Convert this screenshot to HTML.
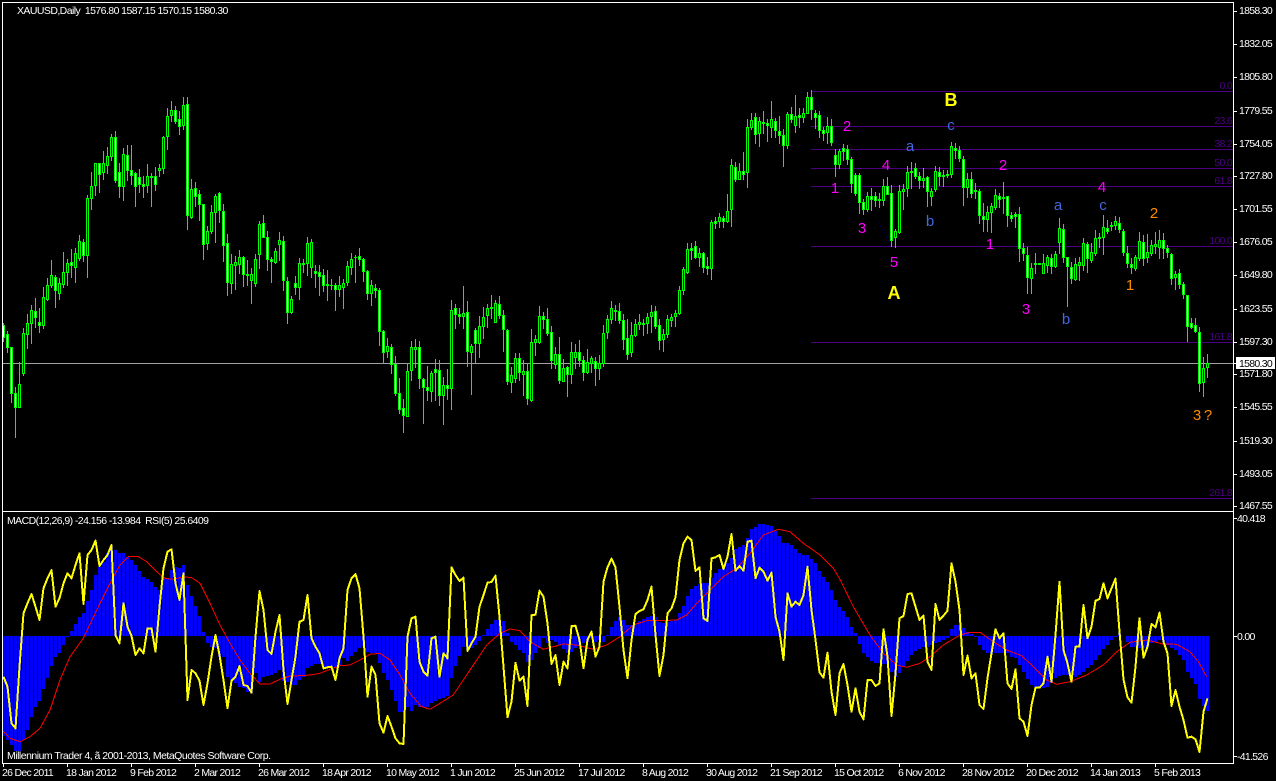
<!DOCTYPE html>
<html><head><meta charset="utf-8"><title>XAUUSD,Daily</title>
<style>
html,body{margin:0;padding:0;background:#000;width:1276px;height:781px;overflow:hidden}
svg{display:block;position:absolute;left:0;top:0}
text{font-family:"Liberation Sans",sans-serif;font-size:10.5px;letter-spacing:-.7px;fill:#fff;white-space:pre}
.f{fill:#4b0082;text-anchor:end}
.w{font-size:15px;letter-spacing:0;text-anchor:middle}
.m{fill:#ff00ff}.o{fill:#ff8c00}.u{fill:#4169e1}
.y{fill:#ffff00;font-size:18px;font-weight:bold;letter-spacing:0;text-anchor:middle}
</style></head><body>
<svg id="c" width="1276" height="781" viewBox="0 0 1276 781" xmlns="http://www.w3.org/2000/svg">
<rect width="1276" height="781" fill="#000"/>
<g id="fib" fill="#4b0082" shape-rendering="crispEdges">
<rect x="811" y="91" width="422" height="1"/><rect x="811" y="126" width="422" height="1"/><rect x="811" y="149" width="422" height="1"/><rect x="811" y="168" width="422" height="1"/><rect x="811" y="186" width="422" height="1"/><rect x="811" y="246" width="422" height="1"/><rect x="811" y="342" width="422" height="1"/><rect x="811" y="498" width="422" height="1"/>
</g>
<line x1="811" y1="91" x2="891" y2="246" stroke="#000080" stroke-width="1" stroke-dasharray="1 3"/>
<rect x="3" y="363" width="1230" height="1" fill="#a0a0a0"/>
<g id="cd" shape-rendering="crispEdges"></g>
<g id="hs" fill="#0000ff" shape-rendering="crispEdges"></g>
<polyline id="rd" fill="none" stroke="#ff0000" stroke-width="1" shape-rendering="crispEdges"/>
<polyline id="rs" fill="none" stroke="#ffff00" stroke-width="2" stroke-linejoin="round" shape-rendering="crispEdges"/>
<g fill="#fff" shape-rendering="crispEdges">
<rect x="2" y="2" width="1232" height="1"/><rect x="2" y="2" width="1" height="762"/><rect x="1233" y="2" width="1" height="762"/><rect x="2" y="511" width="1232" height="1"/><rect x="2" y="763" width="1232" height="1"/>
</g>
<g id="tk" fill="#fff" shape-rendering="crispEdges"></g>
<g class="f">
<text class="f" x="1232" y="89">0.0</text><text class="f" x="1232" y="124">23.6</text><text class="f" x="1232" y="147">38.2</text><text class="f" x="1232" y="166">50.0</text><text class="f" x="1232" y="184">61.8</text><text class="f" x="1232" y="244">100.0</text><text class="f" x="1232" y="340">161.8</text><text class="f" x="1232" y="496">261.8</text>
</g>
<text x="17" y="14" style="letter-spacing:-.57px">XAUUSD,Daily  1576.80 1587.15 1570.15 1580.30</text>
<text x="7" y="524" style="letter-spacing:-.57px">MACD(12,26,9) -24.156 -13.984  RSI(5) 25.6409</text>
<text x="7" y="759" style="letter-spacing:-.5px">Millennium Trader 4, ã 2001-2013, MetaQuotes Software Corp.</text>
<text x="1239" y="14">1858.30</text><text x="1239" y="47">1832.05</text><text x="1239" y="80">1805.80</text><text x="1239" y="114">1779.55</text><text x="1239" y="147">1754.05</text><text x="1239" y="179">1727.80</text><text x="1239" y="212">1701.55</text><text x="1239" y="245">1676.05</text><text x="1239" y="278">1649.80</text><text x="1239" y="312">1623.55</text><text x="1239" y="345">1597.30</text><text x="1239" y="377">1571.80</text><text x="1239" y="410">1545.55</text><text x="1239" y="444">1519.30</text><text x="1239" y="477">1493.05</text><text x="1239" y="509">1467.55</text>
<rect x="1236" y="357" width="39" height="12" fill="#fff"/>
<text x="1239" y="367" style="fill:#000">1580.30</text>
<text x="1237" y="522">40.418</text><text x="1237" y="640">0.00</text><text x="1237" y="760">-41.526</text>
<text x="2" y="776">26 Dec 2011</text><text x="66" y="776">18 Jan 2012</text><text x="130" y="776">9 Feb 2012</text><text x="194" y="776">2 Mar 2012</text><text x="258" y="776">26 Mar 2012</text><text x="322" y="776">18 Apr 2012</text><text x="386" y="776">10 May 2012</text><text x="450" y="776">1 Jun 2012</text><text x="514" y="776">25 Jun 2012</text><text x="578" y="776">17 Jul 2012</text><text x="642" y="776">8 Aug 2012</text><text x="706" y="776">30 Aug 2012</text><text x="770" y="776">21 Sep 2012</text><text x="834" y="776">15 Oct 2012</text><text x="898" y="776">6 Nov 2012</text><text x="962" y="776">28 Nov 2012</text><text x="1026" y="776">20 Dec 2012</text><text x="1090" y="776">14 Jan 2013</text><text x="1154" y="776">5 Feb 2013</text>
<text class="w m" x="847" y="131">2</text><text class="w m" x="835" y="193">1</text><text class="w m" x="886" y="170">4</text><text class="w m" x="862" y="233">3</text><text class="w m" x="894" y="267">5</text>
<text class="y" x="894" y="299">A</text><text class="y" x="951" y="106">B</text>
<text class="w u" x="910" y="151">a</text><text class="w u" x="930" y="226">b</text><text class="w u" x="951" y="130">c</text>
<text class="w m" x="1003" y="170">2</text><text class="w m" x="990" y="249">1</text><text class="w m" x="1026" y="314">3</text>
<text class="w u" x="1058" y="210">a</text><text class="w u" x="1066" y="324">b</text><text class="w u" x="1103" y="210">c</text><text class="w m" x="1102" y="192">4</text>
<text class="w o" x="1154" y="218">2</text><text class="w o" x="1130" y="290">1</text><text class="w o" x="1197" y="420">3</text><text class="w o" x="1208" y="420">?</text>
</svg>
<script>
var NS="http://www.w3.org/2000/svg";
function R(p,x,y,w,h,f){var r=document.createElementNS(NS,"rect");r.setAttribute("x",x);r.setAttribute("y",y);r.setAttribute("width",w);r.setAttribute("height",h);if(f)r.setAttribute("fill",f);p.appendChild(r);}
var C="730 735 770 782 w,752 763 800 815 w,802 802 940 965 w,920 940 982 1070 w,847 913 982 982 b,745 760 880 884 b,702 730 762 803 b,675 691 728 789 b,655 694 712 740 w,684 727 734 755 w,621 652 734 745 b,595 616 656 659 b,540 586 616 622 b,586 592 631 680 w,595 610 638 656 b,516 577 613 620 b,538 550 577 614 b,507 547 556 590 w,505 520 560 605 b,465 484 535 540 b,478 487 526 543 w,345 355 526 590 b,277 319 355 386 b,250 250 316 345 b,250 250 283 335 w,213 250 277 297 b,200 229 256 280 b,162 172 229 240 b,153 172 301 307 w,249 277 319 350 w,205 223 319 359 b,195 226 271 300 w,195 271 286 313 w,277 280 319 377 w,268 292 313 335 w,289 313 319 350 w,252 289 316 335 b,280 288 290 377 w,260 289 313 330 w,253 265 271 288 b,168 172 265 280 b,84 107 169 208 b,63 91 104 122 b,78 91 122 128 w,93 118 139 163 w,52 76 136 147 b,51 73 406 446 w,297 328 412 415 b,307 325 349 378 w,331 343 373 420 w,373 373 493 537 w,437 454 490 506 b,376 397 454 458 b,342 349 397 485 b,337 340 391 425 w,373 394 496 542 w,463 490 607 644 w,523 553 610 640 b,528 547 556 627 b,510 532 553 580 b,528 532 583 618 w,541 583 584 615 w,565 583 601 668 b,522 538 610 618 b,423 433 521 565 b,405 430 470 472 w,453 472 536 570 w,530 538 542 605 w,505 514 545 548 b,456 481 493 540 b,469 484 601 629 w,592 604 697 728 w,648 658 697 700 b,588 610 622 642 w,535 550 622 656 b,538 550 553 577 b,472 490 550 584 b,478 487 562 590 b,556 574 580 620 w,556 577 589 644 w,568 586 616 632 w,571 613 616 659 w,596 615 616 628 w,610 616 628 689 w,589 616 628 647 b,598 610 620 683 b,544 559 607 616 b,520 538 562 583 b,526 531 532 605 w,505 529 538 556 w,535 538 574 602 w,571 574 640 656 w,600 616 640 674 b,613 625 631 652 w,625 631 754 794 w,750 754 817 850 w,775 799 814 830 b,793 802 853 878 w,828 853 940 944 w,895 940 988 1000 w,958 985 1006 1055 w,850 874 1009 1009 b,783 802 871 899 b,778 802 808 860 b,782 802 895 923 w,"
+"895 898 922 1028 w,858 922 931 960 w,873 880 934 962 b,838 868 877 960 w,840 871 946 974 w,892 916 946 1031 b,868 916 925 958 w,660 691 925 986 b,672 685 703 743 w,685 703 709 728 w,618 700 709 743 b,663 697 814 858 w,793 799 817 941 b,745 751 790 846 w,709 739 790 830 b,682 712 739 775 b,673 685 706 740 b,645 682 685 715 w,660 670 727 727 b,648 673 706 713 w,690 706 748 812 w,748 751 904 912 w,862 886 907 935 b,820 835 895 905 b,820 835 877 900 w,840 874 883 946 b,850 874 955 971 w,747 787 959 962 b,765 778 787 825 b,678 709 787 790 b,697 709 718 745 w,685 718 760 765 w,739 757 841 865 w,802 823 853 865 b,771 823 901 908 w,838 865 904 904 b,857 862 883 947 w,785 817 883 908 b,793 817 832 865 b,781 817 841 857 w,829 841 877 899 w,808 847 877 880 b,829 835 850 877 b,830 844 865 914 w,825 850 865 897 b,736 760 850 858 b,706 718 755 774 b,663 685 718 730 b,676 691 692 720 w,670 694 721 730 w,703 721 778 806 w,718 775 823 836 w,725 766 817 829 b,718 733 765 769 b,703 727 733 748 b,717 730 731 765 w,700 712 730 760 b,675 697 709 757 b,677 694 739 745 w,718 736 781 808 w,748 763 778 812 b,706 718 763 770 b,703 712 721 738 b,690 700 709 738 b,618 631 700 703 b,562 568 631 643 b,490 508 577 580 b,490 505 511 538 w,484 499 532 535 w,505 520 532 558 b,517 520 562 575 w,532 559 565 581 w,420 427 565 596 b,412 424 428 443 w,400 412 424 441 b,408 415 422 442 w,343 394 422 425 b,237 256 388 437 b,246 262 298 302 w,250 274 298 298 b,217 274 281 298 w,118 142 277 320 b,99 121 140 146 b,100 112 163 190 w,112 124 160 197 b,94 127 128 160 w,118 130 136 182 w,64 118 142 170 b,115 124 151 170 w,108 154 166 190 w,148 166 196 257 w,95 103 194 203 b,82 103 118 125 w,45 109 136 155 b,83 106 112 140 w,83 100 112 125 b,35 52 100 100 b,31 52 88 118 w,"
+"90 100 112 145 w,92 106 151 170 w,140 151 160 180 w,112 139 157 190 b,118 139 187 196 w,208 226 253 287 w,208 214 253 265 b,193 205 214 240 w,196 208 238 253 w,230 238 310 335 w,280 286 340 345 w,280 286 367 398 w,358 367 388 403 w,335 349 388 393 b,325 349 358 390 w,335 349 361 378 w,340 358 361 380 w,297 319 361 375 b,292 319 343 343 w,316 340 481 497 w,448 454 470 500 b,316 334 457 460 b,313 328 334 387 b,258 277 325 349 b,247 274 277 325 w,250 265 289 295 w,275 289 301 325 w,265 295 301 320 b,287 292 334 377 w,325 334 349 374 b,258 274 328 334 b,262 277 289 315 w,270 286 287 319 w,270 283 286 290 w,185 199 283 292 b,190 205 211 235 w,198 211 235 242 w,228 238 322 375 w,280 298 322 352 b,275 298 340 350 w,310 331 334 355 w,328 334 406 430 w,370 409 418 452 w,378 397 418 453 b,368 379 397 455 b,327 346 382 388 b,338 349 358 382 w,305 352 355 400 w,349 349 406 437 w,395 406 415 422 w,395 403 409 440 w,382 403 505 542 w,488 505 520 540 w,502 526 592 640 w,550 565 595 640 b,520 550 552 578 w,550 550 552 552 w,522 550 580 580 b,525 532 556 575 b,522 535 559 580 w,514 523 559 560 b,415 445 487 520 b,432 448 532 545 w,530 532 559 677 w,545 562 595 610 w,535 553 596 600 b,530 547 556 600 b,475 490 556 570 b,485 493 535 575 w,490 517 541 545 b,450 475 518 525 b,460 472 473 500 w,405 442 472 522 b,420 445 454 460 w,425 436 437 450 w,408 424 436 446 b,412 430 448 455 w,448 454 517 525 w,497 520 550 560 w,535 553 562 578 w,525 532 565 570 b,457 484 535 540 b,465 487 535 555 w,463 517 532 545 b,480 496 520 525 b,455 493 499 520 b,450 481 502 535 b,460 481 505 535 w,495 505 515 530 w,520 523 595 612 w,572 583 592 628 b,568 580 613 625 w,605 613 643 655 w,645 646 739 782 w,715 730 741 745 w,715 736 753 755 w,740 757 910 932 w,830 865 907 948 b,822 850 862 890 b";
var cd=document.getElementById("cd");
function Y(v){return Math.round(80+v/3);}
C.split(",").forEach(function(s,k){
 var a=s.split(" ");var h=Y(+a[0]),t=Y(+a[1]),b=Y(+a[2]),l=Y(+a[3]);var x=3+4*k;
 R(cd,x,h,1,Math.max(1,l-h+1),"#00ff00");
 R(cd,x-1,t,3,Math.max(1,b-t+1),"#00ff00");
 if(b-t>=2)R(cd,x,t+1,1,b-t-1,a[4]=="w"?"#ffffff":"#000000");
});
var H4=[678,690,705,722,722,690,660,622,592,574,538,504,468,442,430,405,382,362,342,322,310,274,240,195,172,155,130,112,120,130,130,140,150,165,182,202,208,217,232,240,200,205,180,172,174,166,226,258,288,318,366,398,410,415,442,442,500,510,520,530,535,545,550,490,515,500,498,495,490,480,512,515,525,525,510,500,475,468,462,462,470,472,470,470,465,445,452,438,425,415,408,425,428,430,460,490,510,540,572,605,605,590,604,585,590];
var H5=[590,590,578,572,568,565,558,505,468,438,412,420,415,405,392,375,358,342,330,330,334,370,395,405,420,430,455,450,430,415,384,400,390,395,405,418,430,425,415,405,400,395,385,395,390,395,375,350,332,322,330,345,345,340,332,328,322,318,322,335,338,335,332,330,310,288,258,238,228,222,220,218,205,190,178,170,160,145,118,110,105,85,58,50,42,42,44,48,62,78,98,100,105,118,128,135,135,148,160,182,202,215,240,270,292];
var H6=[303,320,352,370,402,430,440,452,460,460,462,462,485,500,490,470,452,435,422,418,412,410,405,400,395,390,385,358,345,345,355,365,372,382,405,420,430,432,430,430,430,430,442,445,465,485,508,525,530,535,535,532,520,505,498,495,495,505,500,495,485,475,465,450,435,418,405,390,380,370,378,395,410,412,415,415,412,400,395,390,395,405,415,420,435,450,485,505,522,568,588,603];
var H=[].concat(H4,H5,H6);
var hs=document.getElementById("hs");
H.forEach(function(v,k){var y=Math.round(510+v/3);var x=2+4*k;if(k==0){x=3;}
 var w=k==0?2:3;
 if(y<636)R(hs,x,y,w,636-y);else if(y>636)R(hs,x,636,w,y-636);});
var R4=[500,530,640,655,470,310,280,252,290,330,235,205,180,290,265,220,190,205,165,130,282,135,120,92,168,150,135,105,375,400,280,350,378,435,415,430,355,355,425,290,175,125,118,220,270,190,570,480,490,512,585,520,440,375,435,510,595,512,500,468,525,528,548,380,243,300,420,432,365,315,480,582,510,440,335,330,255,385,410,430,475,472,470,510,445,415,240,205,192,235,380,560,470,495,640,668,618,650,685,700,702,380,325,320,455];
var R5=[485,497,385,380,500,430,445,172,195,213,203,423,400,380,290,255,218,216,197,320,470,622,575,458,512,500,588,316,314,242,260,340,462,435,525,455,475,348,347,390,475,390,365,440,410,215,172,146,172,290,420,505,390,312,303,298,270,230,375,498,435,310,295,262,150,100,80,90,183,172,325,333,145,142,135,177,140,72,182,168,182,95,92,205,173,185,212,188,320,365,450,250,290,275,285,255,170,300,390,487,503,428,545,615,490];
var R6=[462,525,605,535,605,628,510,510,528,520,358,440,618,490,325,318,252,250,290,330,317,455,480,282,330,317,302,160,215,300,495,437,505,490,585,597,505,430,358,385,370,520,537,478,625,635,678,585,533,533,520,440,515,375,215,420,460,515,410,410,285,385,350,272,267,220,265,235,206,365,508,562,578,470,325,443,410,342,352,308,395,430,588,540,590,630,683,680,688,726,605,565];
var P=[].concat(R4,R5,R6);
document.getElementById("rs").setAttribute("points",P.map(function(v,k){return (3.5+4*k)+","+(510+v/3).toFixed(1);}).join(" "));
var r4=[8,662,30,685,60,695,90,680,120,655,150,600,180,510,210,440,250,385,290,300,330,220,360,165,385,140,415,140,440,155,470,185,495,205,520,208,550,200,575,203,600,220,630,280,660,345,690,400,720,450,750,490,780,522,810,522,840,508,870,498,900,497,930,495,960,490,990,478,1020,467,1050,465,1080,450,1110,433,1140,430,1170,450,1200,495,1230,550,1260,585];
var r5=[0,588,30,598,60,580,100,555,130,510,170,450,200,405,240,370,270,357,300,362,330,395,370,418,400,410,430,402,470,405,520,418,560,405,600,380,640,345,680,332,720,332,770,330,800,315,830,280,870,240,910,200,950,175,990,130,1030,75,1075,58,1110,65,1150,100,1200,135,1240,175];
var r6=[0,208,40,290,90,375,130,430,170,465,200,472,240,460,270,440,310,405,360,375,390,367,420,367,460,395,500,420,545,437,580,470,620,510,650,523,690,515,740,495,790,465,830,425,870,397,920,390,970,402,1010,403,1050,425,1075,455,1100,500];
var pts=[];
function add(a,o){for(var i=0;i<a.length;i+=2)pts.push((o+a[i]/3).toFixed(1)+","+(510+a[i+1]/3).toFixed(1));}
add(r4,0);add(r5,420);add(r6,840);
document.getElementById("rd").setAttribute("points",pts.join(" "));
var tk=document.getElementById("tk");
[11,44,77,111,144,176,209,242,275,309,342,374,407,441,474,506,518,636,756,363].forEach(function(y){R(tk,1234,y,3,1);});
for(var i=0;i<19;i++){R(tk,3+64*i,764,1,3);}
</script>
</body></html>
